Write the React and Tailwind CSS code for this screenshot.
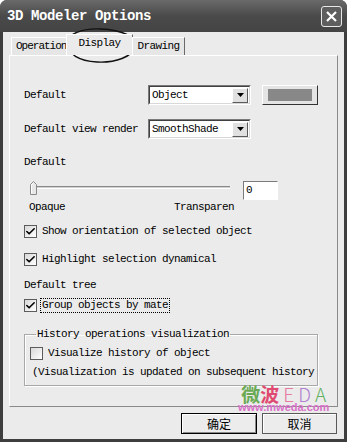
import { Check } from 'lucide-react'

const mono = { fontFamily: '"Liberation Mono", "DejaVu Sans Mono", monospace' }

function Combo({ value }) {
  return (
    <div className="flex h-[20px] w-[103px] items-center border border-t-[#7a7a7a] border-l-[#7a7a7a] border-b-white border-r-white bg-white">
      <div className="flex h-full flex-1 items-center border border-t-[#404040] border-l-[#404040] border-b-[#d8d8d8] border-r-[#d8d8d8] pl-[2px]">
        <span className="flex-1">{value}</span>
        <span className="mr-[1px] flex h-[15px] w-[16px] items-center justify-center border border-t-white border-l-white border-b-[#5a5a5a] border-r-[#5a5a5a] bg-[#e0e0e0]">
          <svg width="7" height="4" viewBox="0 0 7 4"><path d="M0 0h7L3.5 4z" fill="#000" /></svg>
        </span>
      </div>
    </div>
  )
}

function CheckBox({ checked }) {
  return (
    <span className="flex h-[13px] w-[13px] shrink-0 items-center justify-center border border-[#5c5c5c] bg-gradient-to-br from-[#d8d8d8] to-white">
      {checked && <Check size={11} strokeWidth={3.5} className="text-black" />}
    </span>
  )
}

function CheckRow({ label, checked, focus, className = '' }) {
  return (
    <div className={`flex h-[14px] items-center ${className}`}>
      <CheckBox checked={checked} />
      <span className={`ml-[4px] px-[1px] leading-[13px] ${focus ? 'outline outline-1 outline-dotted outline-black' : ''}`}>{label}</span>
    </div>
  )
}

export default function App() {
  return (
    <div className="flex h-[442px] w-[347px] flex-col overflow-hidden rounded-t-[7px] bg-[#3e3e3e] text-[11px] tracking-[-0.6px] text-black" style={mono}>
      <div className="flex h-[32px] shrink-0 items-center justify-between bg-gradient-to-b from-[#6a6a6a] via-[#4a4a4a] to-[#444444] pl-[7px] pr-[5px]">
        <span className="text-[14px] font-bold tracking-[-0.4px] text-white">3D Modeler Options</span>
        <span className="flex h-[21px] w-[21px] items-center justify-center rounded-[3px] border border-[#e8e8e8] bg-[#5e5e5e]">
          <svg width="11" height="11" viewBox="0 0 11 11"><path d="M1 1l9 9M10 1l-9 9" stroke="#fff" strokeWidth="2.2" /></svg>
        </span>
      </div>

      <div className="relative mx-[3px] mb-[3px] flex flex-1 flex-col bg-[#ebebeb]">
        <div className="relative z-10 ml-[8px] mt-[2px] flex h-[21px] items-end">
          <div className="flex h-[18px] w-[56px] items-center whitespace-nowrap border border-b-0 border-t-white border-l-white border-r-[#8a8a8a] bg-[#e6e6e6] pl-[4px] tracking-[-1px]">Operation</div>
          <div className="-mx-[1px] flex h-[21px] w-[67px] items-center justify-center border border-b-0 border-t-white border-l-white border-r-[#6a6a6a] bg-[#ebebeb] pb-[3px]">Display</div>
          <div className="flex h-[18px] w-[53px] items-center justify-center border border-b-0 border-t-white border-l-white border-r-[#6a6a6a] bg-[#e6e6e6]">Drawing</div>
        </div>

        <div className="mx-[6px] flex h-[352px] flex-col border border-t-white border-l-white border-b-[#8a8a8a] border-r-[#8a8a8a] pl-[14px] pt-[29px]">
          <div className="flex h-[20px] items-center">
            <span className="w-[124px]">Default</span>
            <Combo value="Object" />
            <div className="ml-[11px] flex h-[20px] w-[56px] items-center justify-center border border-t-white border-l-white border-b-[#333] border-r-[#333] bg-[#e4e4e4]">
              <div className="h-[12px] w-[44px] bg-[#888888]" />
            </div>
          </div>
          <div className="mt-[14px] flex h-[20px] items-center">
            <span className="w-[124px]">Default view render</span>
            <Combo value="SmoothShade" />
          </div>
          <div className="mt-[15px] flex h-[16px] items-center">Default</div>
          <div className="mt-[11px] flex h-[18px] items-start">
            <div className="relative ml-[6px] h-[14px] w-[200px]">
              <div className="mt-[5px] h-[3px] border-t border-t-[#8a8a8a] border-b border-b-white bg-[#d0d0d0]" />
              <svg className="absolute left-0 top-0" width="7" height="14" viewBox="0 0 7 14">
                <path d="M0.5 13.5V3.5L3.5 0.5L6.5 3.5V13.5Z" fill="#e8e8e8" stroke="#8a8a8a" />
                <path d="M1.5 12.5V4L3.5 1.8" fill="none" stroke="#fff" />
              </svg>
            </div>
            <div className="ml-[13px] flex h-[19px] w-[35px] items-center border border-t-[#7a7a7a] border-l-[#7a7a7a] border-b-white border-r-white bg-white pl-[2px]">0</div>
          </div>
          <div className="mt-[1px] flex h-[14px] items-center">
            <span className="ml-[5px] w-[145px]">Opaque</span>
            <span>Transparen</span>
          </div>
          <CheckRow className="mt-[10px]" checked label="Show orientation of selected object" />
          <CheckRow className="mt-[14px]" checked label="Highlight selection dynamical" />
          <div className="mt-[12px] flex h-[14px] items-center">Default tree</div>
          <CheckRow className="mt-[6px]" checked focus label="Group objects by mate" />

          <fieldset className="mt-[15px] w-[294px] border border-[#a8a8a8] pb-[6px] pl-[5px] shadow-[1px_1px_0_white,inset_1px_1px_0_white]">
            <legend className="ml-[6px] px-[1px] leading-[14px]">History operations visualization</legend>
            <CheckRow className="mt-[5px]" label="Visualize history of object" />
            <div className="mt-[5px] flex h-[14px] items-center pl-[2px]">(Visualization is updated on subsequent history</div>
          </fieldset>
        </div>

        <div className="mt-[6px] flex justify-end gap-[5px] pr-[7px] text-[12px] tracking-normal" style={{ fontFamily: '"Noto Sans CJK SC", sans-serif' }}>
          <div className="flex h-[21px] w-[76px] items-center justify-center border border-black bg-[#ececec] shadow-[inset_1px_1px_0_white,inset_-1px_-1px_0_#8a8a8a]">确定</div>
          <div className="flex h-[21px] w-[75px] items-center justify-center border border-[#5a5a5a] bg-[#ececec] shadow-[inset_1px_1px_0_white]">取消</div>
        </div>

        <div className="pointer-events-none absolute left-[235px] top-[352px] flex flex-col items-center leading-none tracking-normal">
          <div className="flex items-end text-[19px]" style={{ fontFamily: '"Noto Sans CJK SC", sans-serif' }}>
            <span className="font-bold text-[#6aaa55]">微</span>
            <span className="font-bold text-[#e04a70]">波</span>
            <span className="ml-[4px] font-light text-[#e87aa0]">E</span>
            <span className="ml-[4px] font-light text-[#b080d0]">D</span>
            <span className="ml-[4px] font-light text-[#60b060]">A</span>
          </div>
          <span className="-mt-[1px] text-[11px] font-bold text-[#d870c8]" style={{ fontFamily: '"Liberation Sans", sans-serif' }}>www.mweda.com</span>
        </div>

        <svg className="pointer-events-none absolute left-[60px] top-[-6px]" width="76" height="39" viewBox="0 0 76 39">
          <path d="M6 18C2 8 20 2 38 3C58 4 74 10 72 20C70 31 52 37 34 36C16 35 4 28 6 18" fill="none" stroke="#111" strokeWidth="1.4" />
        </svg>
      </div>
    </div>
  )
}
